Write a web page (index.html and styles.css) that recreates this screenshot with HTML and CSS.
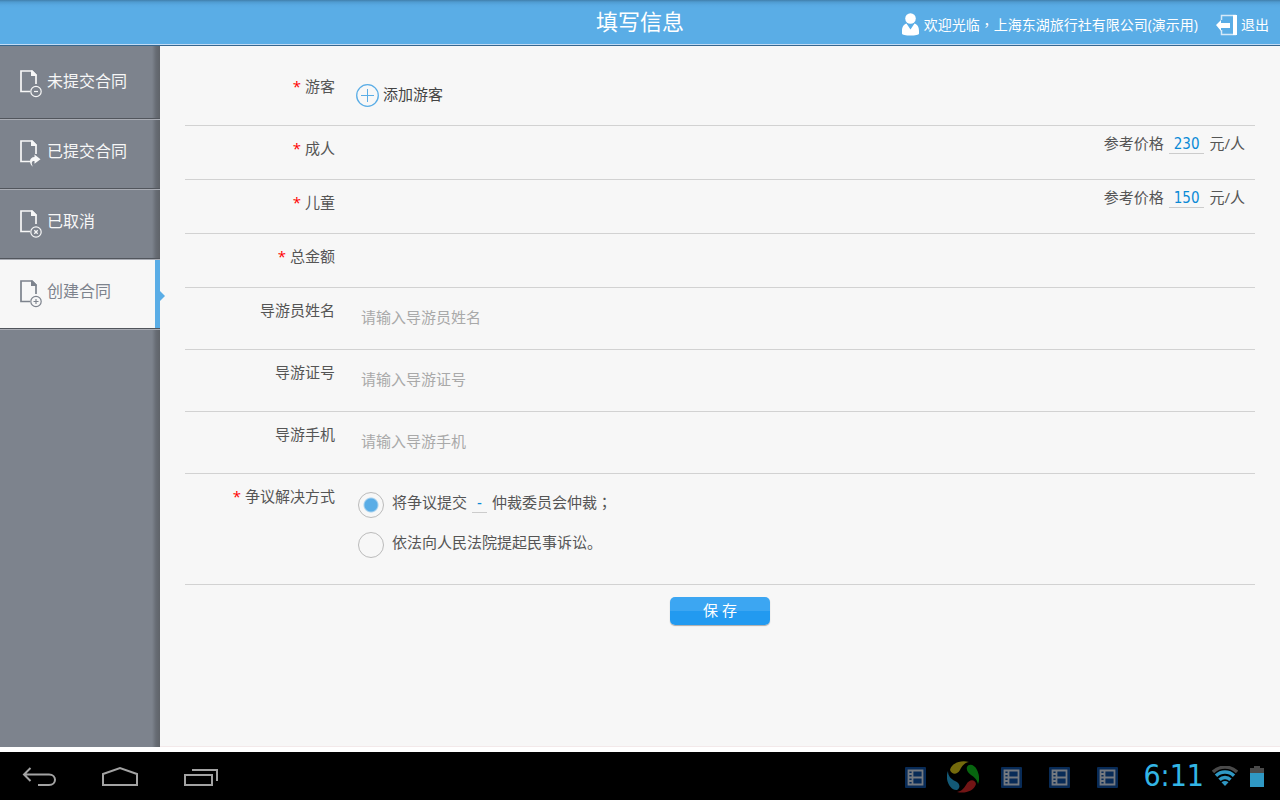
FILE: index.html
```html
<!DOCTYPE html>
<html lang="zh-CN">
<head>
<meta charset="utf-8">
<title>填写信息</title>
<link rel="stylesheet" href="styles.css">
</head>
<body>
<div class="app">
  <header class="topbar">
    <h1 class="topbar-title">填写信息</h1>
    <div class="topbar-user">
      <svg width="19" height="23" viewBox="0 0 19 23" fill="#fff"><circle cx="9.500" cy="5.500" r="5.300"/><path d="M5.500 10.500C2 12 1 14.500 1 18v2.500C1 22 5 22.500 9.500 22.500S18 22 18 20.500V18c0-3.500-1-6-4.500-7.500l-4 6z"/></svg>
      <span>欢迎光临<span class="mark" lang="zh-TW">，</span>上海东湖旅行社有限公司(演示用)</span>
    </div>
    <a class="logout" href="#">
      <svg width="21" height="22" viewBox="0 0 21 22"><path d="M5.500 6V1.500H20M5.500 16v4.500H20" fill="none" stroke="#d5e9f8" stroke-width="1.500"/><path d="M17 1h4v20h-4z" fill="#fff"/><path d="M0 11l5-5v3h9v5H5v3z" fill="#fff"/></svg>
      <span>退出</span>
    </a>
  </header>
  <div class="body">
    <nav class="sidebar">
      <a class="nav-item" href="#">
        <svg width="23" height="28" viewBox="0 0 23 28" fill="none" stroke="currentColor"><path d="M10 21.500H1V1h11l4 4v9" stroke-width="1.700"/><path d="M11 .5h1.500L16.500 4.500V6H11z" fill="currentColor" stroke="none"/><circle cx="16" cy="21.500" r="5.200" stroke-width="1.200"/><path d="M14 21.500h4" stroke-width="1.200"/></svg>
        <span>未提交合同</span>
      </a>
      <a class="nav-item" href="#">
        <svg width="23" height="28" viewBox="0 0 23 28" fill="none" stroke="currentColor"><path d="M10 21.500H1V1h11l4 4v9" stroke-width="1.700"/><path d="M11 .5h1.500L16.500 4.500V6H11z" fill="currentColor" stroke="none"/><path d="M14.500 14.500l6 4.700-6 4.500V21c-3 0-3.500 2-1.500 5.700C8.500 23.500 9 17.300 14.500 17z" fill="currentColor" stroke="none"/></svg>
        <span>已提交合同</span>
      </a>
      <a class="nav-item" href="#">
        <svg width="23" height="28" viewBox="0 0 23 28" fill="none" stroke="currentColor"><path d="M10 21.500H1V1h11l4 4v9" stroke-width="1.700"/><path d="M11 .5h1.500L16.500 4.500V6H11z" fill="currentColor" stroke="none"/><circle cx="16" cy="22" r="5.200" stroke-width="1.200"/><path d="M14.300 20.300l3.400 3.400M17.700 20.300l-3.400 3.400" stroke-width="1.300"/></svg>
        <span>已取消</span>
      </a>
      <a class="nav-item active" href="#" aria-current="page">
        <svg width="23" height="28" viewBox="0 0 23 28" fill="none" stroke="currentColor"><path d="M10 21.500H1V1h11l4 4v9" stroke-width="1.700"/><path d="M11 .5h1.500L16.500 4.500V6H11z" fill="currentColor" stroke="none"/><circle cx="16" cy="21.500" r="5.200" stroke-width="1.200"/><path d="M13.500 21.500h5M16 19v5" stroke-width="1.100"/></svg>
        <span>创建合同</span>
      </a>
    </nav>
    <main class="content">
      <form class="form">
        <div class="row tall">
          <span class="label"><b class="req">*</b> 游客</span>
          <button class="add" type="button">
            <svg width="24" height="24" viewBox="0 0 24 24" fill="none" stroke="#5aade6"><circle cx="12.500" cy="12.500" r="10.800" stroke-width="1.300"/><path d="M6 12.500h13M12.500 6v13" stroke-width="1"/></svg>
            <span>添加游客</span>
          </button>
        </div>
        <div class="row">
          <span class="label"><b class="req">*</b> 成人</span>
          <p class="price">参考价格<span class="value">230</span>元/人</p>
        </div>
        <div class="row">
          <span class="label"><b class="req">*</b> 儿童</span>
          <p class="price">参考价格<span class="value">150</span>元/人</p>
        </div>
        <div class="row">
          <span class="label"><b class="req">*</b> 总金额</span>
        </div>
        <div class="row tall">
          <label class="label" for="guide-name">导游员姓名</label>
          <input class="field" id="guide-name" type="text" placeholder="请输入导游员姓名">
        </div>
        <div class="row tall">
          <label class="label" for="guide-id">导游证号</label>
          <input class="field" id="guide-id" type="text" placeholder="请输入导游证号">
        </div>
        <div class="row tall">
          <label class="label" for="guide-phone">导游手机</label>
          <input class="field" id="guide-phone" type="tel" placeholder="请输入导游手机">
        </div>
        <div class="row">
          <span class="label" id="dispute"><b class="req">*</b> 争议解决方式</span>
          <div class="options" role="radiogroup" aria-labelledby="dispute">
            <label class="option"><input class="radio" type="radio" name="dispute" checked><span class="option-text">将争议提交<span class="value">-</span>仲裁委员会仲裁<span class="mark" lang="zh-TW">；</span></span></label>
            <label class="option"><input class="radio" type="radio" name="dispute"><span class="option-text">依法向人民法院提起民事诉讼。</span></label>
          </div>
        </div>
        <button class="save" type="submit">保 存</button>
      </form>
    </main>
  </div>
  <footer class="system">
    <div class="system-nav">
      <button type="button" aria-label="返回"><svg width="36" height="24" viewBox="0 0 36 24" fill="none" stroke="#a3a3a3" stroke-width="2"><path d="M8.500 2L2 8.500l6.500 6.500M2 8.500h25c8 0 8 10.500 0 10.500H16"/></svg></button>
      <button type="button" aria-label="主屏幕"><svg width="38" height="24" viewBox="0 0 38 24" fill="none" stroke="#a3a3a3" stroke-width="2"><path d="M1 19V8l17-6 17 6v11z"/></svg></button>
      <button type="button" aria-label="最近任务"><svg width="36" height="24" viewBox="0 0 36 24" fill="none" stroke="#a3a3a3" stroke-width="2"><path d="M1 9h27v10H1zM8 4h25v11"/></svg></button>
    </div>
    <div class="status">
      <div class="tray">
        <svg width="32" height="32" viewBox="0 0 32 32"><use href="#film"/></svg>
        <svg width="32" height="32" viewBox="0 0 32 32"><path d="M3 9C5 1 15-1 22 1 17 2 15 5 13 9c-3 5-8 5-10 0z" fill="#746a0c"/><path d="M20 6c2-4 8-2 10 3 2 4 3 9 1 14-1-5-4-7-7-9-3-2-5-5-4-8z" fill="#07650f"/><path d="M29 23c-2 7-11 10-19 8 5-1 7-4 9-7 3-6 9-6 10-1z" fill="#721515"/><path d="M1 10c0 5 3 8 7 10 5 2 6 7 2 9C4 30-3 19 1 10z" fill="#135976"/></svg>
        <svg width="32" height="32" viewBox="0 0 32 32"><use href="#film"/></svg>
        <svg width="32" height="32" viewBox="0 0 32 32"><use href="#film"/></svg>
        <svg width="32" height="32" viewBox="0 0 32 32"><defs><g id="film"><rect x="6" y="6" width="21" height="21" rx="1" fill="#082b57"/><path d="M9.500 8.500v16M13.500 8.500v16M9.500 9.500h14v14h-14M13.500 16.500h10M9.500 13h4M9.500 16.500h4M9.500 20h4" fill="none" stroke="#747980" stroke-width="1.800"/></g></defs><use href="#film"/></svg>
      </div>
      <time class="clock">6:11</time>
      <svg width="26" height="20" viewBox="0 0 26 20" fill="none" stroke="#2f98c4" stroke-width="3.400"><path d="M1 6C8-.5 18-.5 25 6" stroke="#4a4a4a"/><path d="M4 9.700c5-5 13-5 18 0M7.500 13.700c3-3 8-3 11 0"/><path d="M13 20l-3.500-3.700q3.500-2.500 7 0z" fill="#2f98c4" stroke="none"/></svg>
      <svg class="battery" width="14" height="21" viewBox="0 0 14 21"><path d="M0 2h4V0h6v2h4v6H0z" fill="#4a4a4a"/><path d="M0 7h14v14H0z" fill="#2f98c4"/></svg>
    </div>
  </footer>
</div>
</body>
</html>
```
FILE: styles.css
```css
* { box-sizing: border-box; }
body {
  margin: 0;
  background: #fff;
  color: #555;
  font-family: "Open Sans", "Noto Sans CJK SC", sans-serif;
  font-size: 15px;
  font-weight: 400;
  line-height: 22px;
}
button, input { font: inherit; color: inherit; }
button { border: 0; padding: 0; background: none; cursor: pointer; }
a { color: inherit; text-decoration: none; }
svg { display: block; flex: none; }
.app { display: flex; flex-direction: column; min-height: 100vh; }
.mark { font-family: "Noto Sans CJK TC", sans-serif; }

.topbar {
  position: relative;
  display: flex;
  align-items: center;
  justify-content: flex-end;
  gap: 18px;
  height: 46px;
  padding: 4px 11px 0 0;
  color: #fff;
  font-size: 14px;
  background: linear-gradient(#417fab, #4f9bd0 2px, #58a9e2 5px, #5aade6 8px);
  border-bottom: 1px solid #37678f;
  box-shadow: inset 0 -1px #c3dcf5;
}
.topbar-title {
  position: absolute;
  inset: 0;
  margin: 0;
  text-align: center;
  font-size: 22px;
  font-weight: 400;
  line-height: 42px;
}
.topbar-user, .logout { display: flex; align-items: center; gap: 4px; position: relative; }

.body { display: flex; flex: 1; margin-bottom: 5px; }
.sidebar {
  flex: none;
  width: 160px;
  padding-top: 4px;
  background: linear-gradient(to right, #7d838d 152px, #676c74 156px, #5f6369 160px);
}
.nav-item {
  display: flex;
  align-items: center;
  gap: 4px;
  height: 70px;
  padding: 0 0 2px 20px;
  color: #f7f7f7;
  font-size: 16px;
  border-bottom: 1px solid #a9acb4;
  box-shadow: inset 0 -1px #51555c;
}
.nav-item span { padding-bottom: 6px; }
.nav-item.active {
  position: relative;
  color: #7d838d;
  background: linear-gradient(to left, #5aade6 5px, #f7f7f7 5px);
}
.nav-item.active::after {
  content: "";
  position: absolute;
  left: 100%;
  top: 31px;
  border: 5px solid transparent;
  border-left-color: #5aade6;
  border-right: 0;
}

.content {
  flex: 1;
  min-width: 0;
  padding: 18px 25px 24px;
  background: #f7f7f7;
  border-bottom: 1px solid #f3e9ea;
}
.form { display: flex; flex-direction: column; }
.row { display: flex; min-height: 54px; border-bottom: 1px solid #d2d2d2; }
.row.tall { min-height: 62px; }
.label { flex: none; width: 150px; padding-top: 11px; text-align: right; }
.req { color: #f00; font-weight: 400; }
.add { display: flex; align-items: center; gap: 4px; margin-left: 20px; color: #444; }
.add span { padding-bottom: 2px; }
.price { margin: 0 10px 0 auto; padding-top: 6px; }
.value {
  display: inline-block;
  margin: 0 5px;
  padding: 0 5px;
  color: #0a8ad6;
  font-family: "DejaVu Sans Condensed", "DejaVu Sans", sans-serif;
  line-height: 18px;
  border-bottom: 1px solid #ccc;
}
.field {
  flex: 1;
  min-width: 0;
  margin-left: 20px;
  padding: 0 6px 4px;
  border: 0;
  outline: 0;
  background: none;
}
.field::placeholder { color: #a9a9a9; opacity: 1; }
.options { display: grid; gap: 14px; margin-left: 23px; padding: 18px 0 26px; }
.option { display: flex; align-items: center; gap: 8px; height: 26px; }
.option-text { padding-bottom: 6px; }
.radio {
  appearance: none;
  flex: none;
  width: 26px;
  height: 26px;
  margin: 0;
  border: 1px solid #bbb;
  border-radius: 50%;
}
.radio:checked { background: radial-gradient(circle, #5aade6 6px, transparent 8px); }
.save {
  align-self: center;
  width: 100px;
  height: 28px;
  margin-top: 12px;
  padding-bottom: 2px;
  color: #fff;
  border-radius: 5px;
  background: linear-gradient(#3ca6f2 50%, #229af0 50%);
  box-shadow: 0 1px 1px #aaa;
}

.system {
  display: flex;
  align-items: center;
  justify-content: space-between;
  height: 48px;
  padding: 0 16px 0 22px;
  background: #000;
}
.system-nav { display: flex; gap: 44px; padding-top: 4px; }
.status { display: flex; align-items: center; }
.tray { display: flex; gap: 16px; padding-top: 2px; }
.clock {
  margin: 0 8px 0 20px;
  color: #33b5e5;
  font-family: "DejaVu Sans Condensed", "DejaVu Sans", sans-serif;
  font-size: 30px;
}
.battery { margin-left: 12px; }
```
